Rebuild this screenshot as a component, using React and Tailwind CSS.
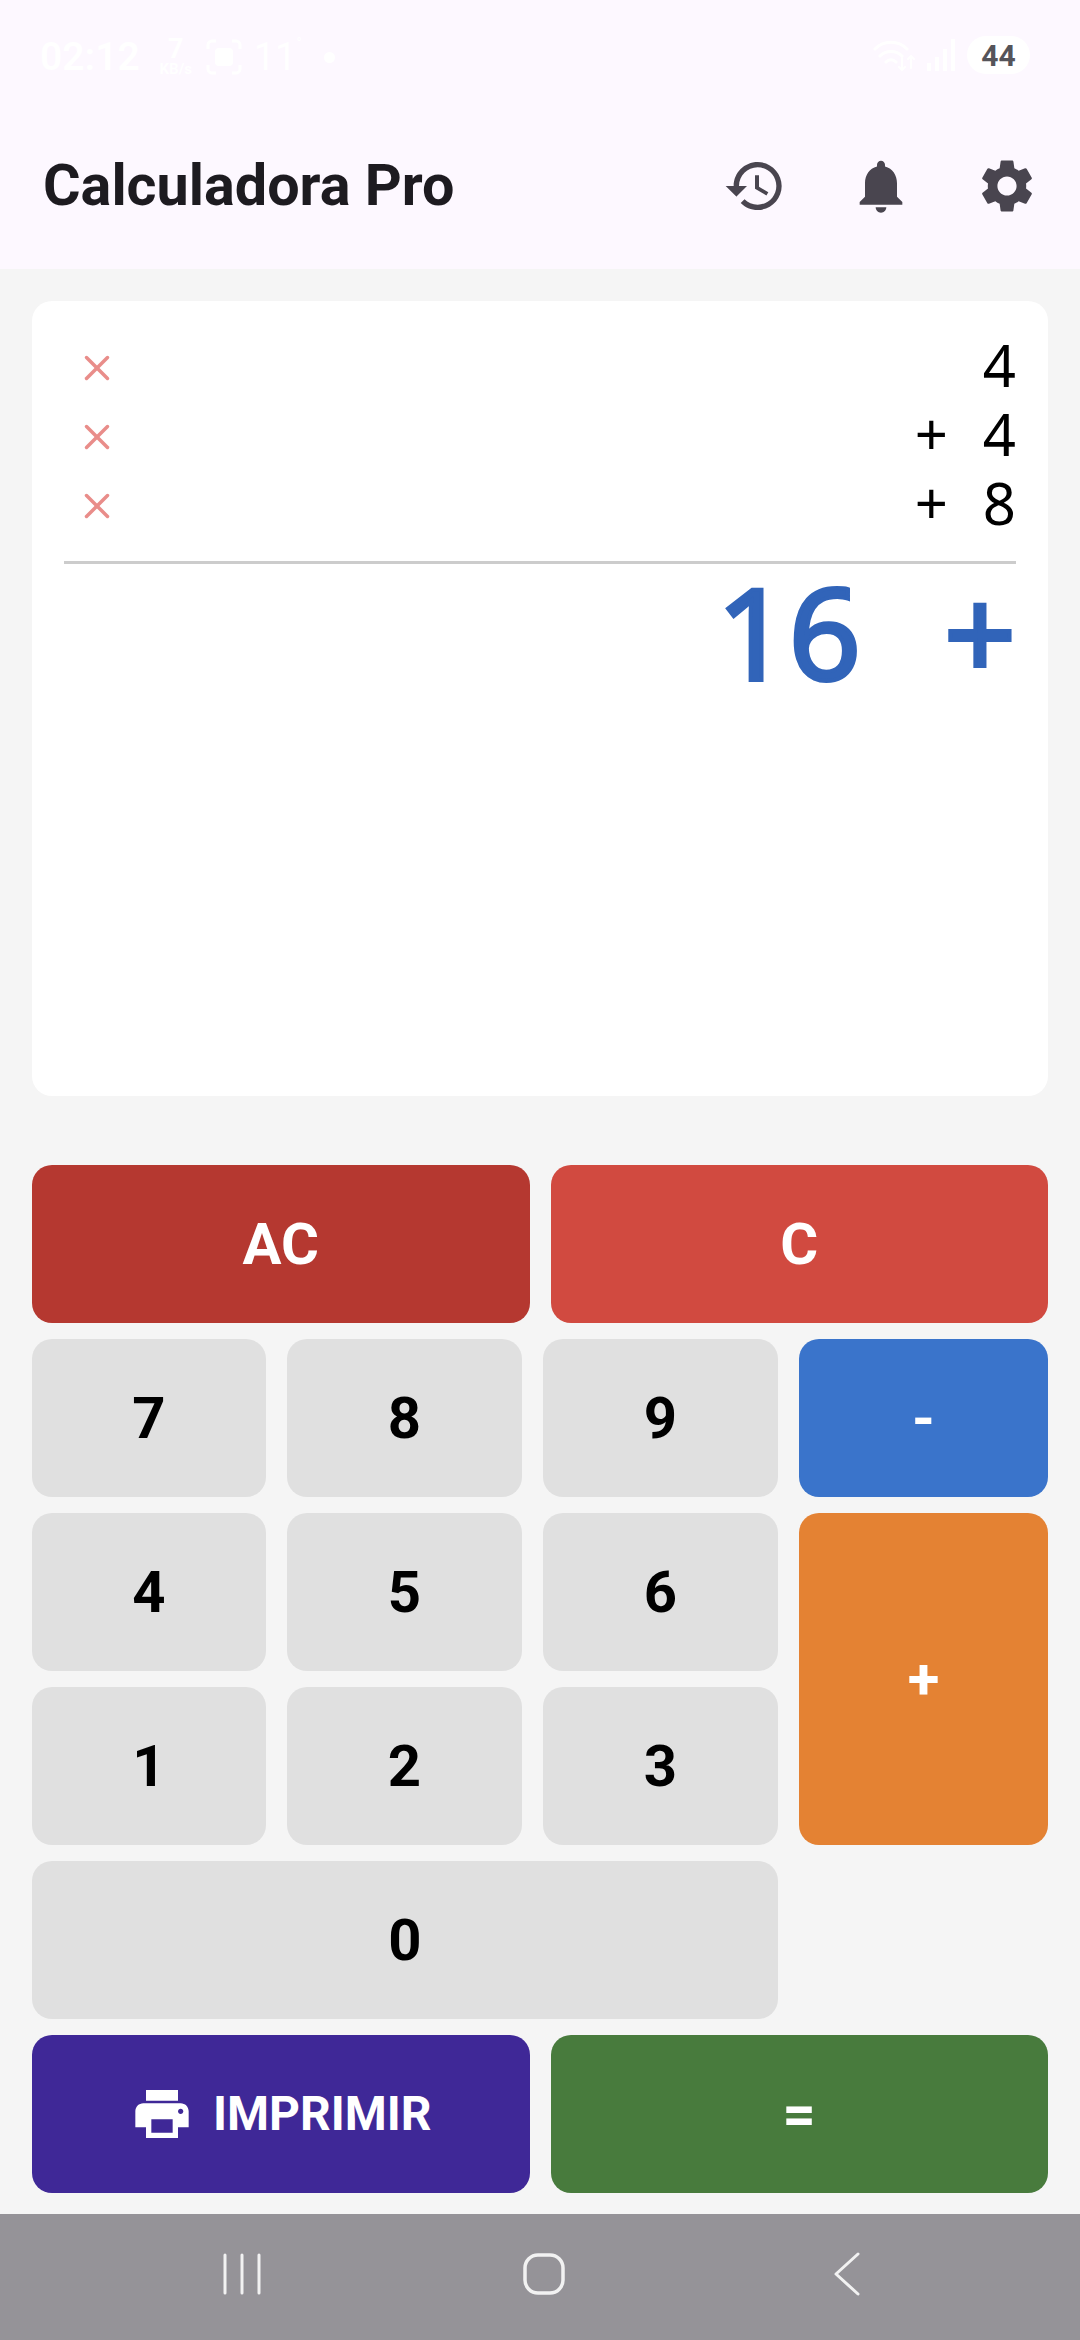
import { X } from "lucide-react";

const NUMBER_KEY = "bg-[#e0e0e0] text-black";

const ENTRIES = [
  { id: 1, op: "", value: "4" },
  { id: 2, op: "+", value: "4" },
  { id: 3, op: "+", value: "8" },
];

function MaterialIcon({ d, className }) {
  return (
    <svg viewBox="0 0 24 24" fill="currentColor" className={className}>
      <path d={d} />
    </svg>
  );
}

const ICONS = {
  history:
    "M13 3c-4.97 0-9 4.03-9 9H1l3.89 3.89.07.14L9 12H6c0-3.87 3.13-7 7-7s7 3.13 7 7-3.13 7-7 7c-1.93 0-3.68-.79-4.94-2.06l-1.42 1.42C8.27 19.99 10.51 21 13 21c4.97 0 9-4.03 9-9s-4.03-9-9-9zm-1 5v5l4.28 2.54.72-1.21-3.5-2.08V8H12z",
  bell: "M12 22c1.1 0 2-.9 2-2h-4c0 1.1.89 2 2 2zm6-6v-5c0-3.07-1.64-5.64-4.5-6.32V4c0-.83-.67-1.5-1.5-1.5s-1.5.67-1.5 1.5v.68C7.63 5.36 6 7.92 6 11v5l-2 2v1h16v-1l-2-2z",
  settings:
    "M19.14 12.94c.04-.3.06-.61.06-.94 0-.32-.02-.64-.07-.94l2.03-1.58c.18-.14.23-.41.12-.61l-1.92-3.32c-.12-.22-.37-.29-.59-.22l-2.39.96c-.5-.38-1.03-.7-1.62-.94l-.36-2.54c-.04-.24-.24-.41-.48-.41h-3.84c-.24 0-.43.17-.47.41l-.36 2.54c-.59.24-1.13.57-1.62.94l-2.39-.96c-.22-.08-.47 0-.59.22L2.74 8.87c-.12.21-.08.47.12.61l2.03 1.58c-.05.3-.09.63-.09.94s.02.64.07.94l-2.03 1.58c-.18.14-.23.41-.12.61l1.92 3.32c.12.22.37.29.59.22l2.39-.96c.5.38 1.03.7 1.62.94l.36 2.54c.05.24.24.41.48.41h3.84c.24 0 .44-.17.47-.41l.36-2.54c.59-.24 1.13-.56 1.62-.94l2.39.96c.22.08.47 0 .59-.22l1.92-3.32c.12-.22.07-.47-.12-.61l-2.01-1.58zM12 15.6c-1.98 0-3.6-1.62-3.6-3.6s1.62-3.6 3.6-3.6 3.6 1.62 3.6 3.6-1.62 3.6-3.6 3.6z",
  print:
    "M19 8H5c-1.66 0-3 1.34-3 3v6h4v4h12v-4h4v-6c0-1.66-1.34-3-3-3zm-3 11H8v-5h8v5zm3-7c-.55 0-1-.45-1-1s.45-1 1-1 1 .45 1 1-.45 1-1 1zm-1-9H6v4h12V3z",
};

function StatusBar() {
  return (
    <div className="h-[110px] pl-[40px] pr-[50px] pt-[36px] flex items-start justify-between text-white">
      <div className="flex items-center">
        <span className="text-[39px] leading-[42px] font-semibold">02:12</span>
        <div className="ml-[19px] flex flex-col items-center w-[34px]">
          <span className="text-[27px] leading-[25px] font-bold">7</span>
          <span className="text-[15px] leading-[15px] font-bold">KB/s</span>
        </div>
        <svg viewBox="0 0 36 36" fill="none" stroke="currentColor" strokeWidth="3" className="ml-[13px] w-[36px] h-[36px]">
          <path d="M2 10V6a4 4 0 0 1 4-4h4M26 2h4a4 4 0 0 1 4 4v4M34 26v4a4 4 0 0 1-4 4h-4M10 34H6a4 4 0 0 1-4-4v-4" />
          <rect x="9" y="9" width="18" height="18" rx="4" fill="currentColor" stroke="none" />
        </svg>
        <span className="ml-[12px] text-[38px] leading-[42px]">11</span>
        <span className="text-[14px] leading-[14px] self-start">°</span>
        <span className="ml-[22px] w-[11px] h-[11px] rounded-full bg-white" />
      </div>
      <div className="flex items-center">
        <svg viewBox="0 0 44 34" fill="none" stroke="currentColor" strokeWidth="3" strokeLinecap="round" className="w-[44px] h-[34px]">
          <path d="M2 11c9-9 23-9 32 0M7 18c6-6 16-6 22 0M13 24c3-3 7-3 10 0" />
          <path d="M29 20v12m-3-3l3 3 3-3M38 30V18m-3 3l3-3 3 3" strokeWidth="2" />
        </svg>
        <div className="ml-[10px] flex items-end gap-[4px] h-[32px]">
          <span className="w-[4px] h-[8px] bg-white" />
          <span className="w-[4px] h-[14px] bg-white" />
          <span className="w-[4px] h-[22px] bg-white" />
          <span className="w-[4px] h-[32px] bg-white" />
        </div>
        <div className="ml-[12px] w-[63px] h-[38px] rounded-full bg-white flex items-center justify-center text-[#55545a] text-[30px] font-bold">
          44
        </div>
      </div>
    </div>
  );
}

function AppBar() {
  return (
    <div className="h-[159px] bg-[#fdf8ff]">
      <div className="h-[152px] pl-[43px] pr-[41px] flex items-center justify-between">
        <h1 className="text-[57.5px] font-bold text-[#1d1b20]">Calculadora Pro</h1>
        <div className="flex items-center gap-[62px] text-[#49454f]">
          <MaterialIcon d={ICONS.history} className="w-[64px] h-[64px]" />
          <MaterialIcon d={ICONS.bell} className="w-[64px] h-[64px]" />
          <MaterialIcon d={ICONS.settings} className="w-[64px] h-[64px]" />
        </div>
      </div>
    </div>
  );
}

function TapeCard() {
  return (
    <div className="h-[795px] rounded-[20px] bg-white px-[32px] pt-[32px] font-['Noto_Sans',sans-serif]">
      {ENTRIES.map((entry) => (
        <div key={entry.id} className="h-[69px] flex items-center justify-between text-black">
          <X strokeWidth={2} className="ml-[12px] w-[42px] h-[42px] text-[#e98d8a]" />
          <div className="flex items-center text-[58px] leading-[60px] pb-[6px]">
            {entry.op && <span className="mr-[35px]">{entry.op}</span>}
            <span>{entry.value}</span>
          </div>
        </div>
      ))}
      <div className="mt-[21px] h-[3px] bg-[#cccccc]" />
      {/* running total with the pending operator; the stroke thickens the regular cut */}
      <div className="flex justify-end text-[#3164b9] text-[126px] leading-[134px] [-webkit-text-stroke:4px_#3164b9]">
        <span>16</span>
        <span className="ml-[83px]">+</span>
      </div>
    </div>
  );
}

function Key({ className, children }) {
  return (
    <button type="button" className={`rounded-[20px] flex items-center justify-center font-bold ${className}`}>
      {children}
    </button>
  );
}

function Keypad() {
  return (
    <div className="flex flex-col gap-[16px] text-[58px]">
      <div className="grid grid-cols-2 gap-[21px] h-[158px]">
        <Key className="bg-[#b53830] text-white">AC</Key>
        <Key className="bg-[#d14a40] text-white">C</Key>
      </div>
      <div className="grid grid-cols-[234px_235px_235px_249px] grid-rows-[158px_158px_158px_158px] gap-x-[21px] gap-y-[16px]">
        <Key className={NUMBER_KEY}>7</Key>
        <Key className={NUMBER_KEY}>8</Key>
        <Key className={NUMBER_KEY}>9</Key>
        <Key className="bg-[#3a74cb] text-white">-</Key>
        <Key className={NUMBER_KEY}>4</Key>
        <Key className={NUMBER_KEY}>5</Key>
        <Key className={NUMBER_KEY}>6</Key>
        <Key className="row-span-2 bg-[#e48233] text-white">+</Key>
        <Key className={NUMBER_KEY}>1</Key>
        <Key className={NUMBER_KEY}>2</Key>
        <Key className={NUMBER_KEY}>3</Key>
        <Key className={`col-span-3 ${NUMBER_KEY}`}>0</Key>
      </div>
      <div className="grid grid-cols-2 gap-[21px] h-[158px]">
        <Key className="bg-[#3f2897] text-white gap-[19px] text-[48px]">
          <MaterialIcon d={ICONS.print} className="w-[64px] h-[64px]" />
          IMPRIMIR
        </Key>
        <Key className="bg-[#487b3d] text-white">=</Key>
      </div>
    </div>
  );
}

function NavBar() {
  return (
    <div className="h-[126px] bg-[#959398] flex items-center pl-[222px] pb-[6px] text-[#f2f2f2]">
      <svg viewBox="0 0 40 42" fill="none" stroke="currentColor" strokeWidth="3" strokeLinecap="round" className="w-[40px] h-[42px]">
        <path d="M3 2v38M20 2v38M37 2v38" />
      </svg>
      <svg viewBox="0 0 42 42" fill="none" stroke="currentColor" strokeWidth="3.5" className="ml-[261px] w-[42px] h-[42px]">
        <rect x="2" y="2" width="38" height="38" rx="13" />
      </svg>
      <svg viewBox="0 0 28 44" fill="none" stroke="currentColor" strokeWidth="3" strokeLinecap="round" strokeLinejoin="round" className="ml-[268px] w-[28px] h-[44px]">
        <path d="M25 2L3 22l22 20" />
      </svg>
    </div>
  );
}

export default function App() {
  return (
    <div className="w-[1080px] h-[2340px] flex flex-col bg-[#f5f5f5] font-['Roboto',sans-serif]">
      <div className="bg-[#fdf8ff]">
        <StatusBar />
        <AppBar />
      </div>
      <main className="flex-1 px-[32px] pt-[32px] flex flex-col gap-[69px]">
        <TapeCard />
        <Keypad />
      </main>
      <NavBar />
    </div>
  );
}
